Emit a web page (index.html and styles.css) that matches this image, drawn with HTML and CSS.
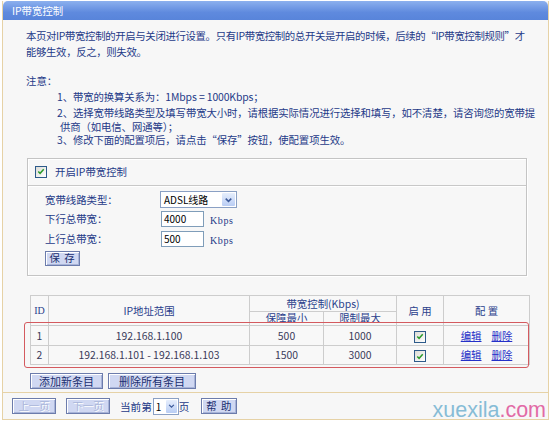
FILE: index.html
```html
<!DOCTYPE html>
<html lang="zh-CN">
<head>
<meta charset="utf-8">
<title>IP带宽控制</title>
<link rel="stylesheet" href="styles.css">
</head>
<body>
<div class="page">
  <div class="titlebar">IP带宽控制</div>
  <div class="content">
    <p class="intro">本页对IP带宽控制的开启与关闭进行设置。只有IP带宽控制的总开关是开启的时候，后续的“IP带宽控制规则”才<br>能够生效，反之，则失效。</p>
    <p class="notice">注意：</p>
    <div class="notes">
      <div class="note n1">1、带宽的换算关系为：1Mbps = 1000Kbps；</div>
      <div class="note">2、选择宽带线路类型及填写带宽大小时，请根据实际情况进行选择和填写，如不清楚，请咨询您的宽带提</div>
      <div class="note cont">供商（如电信、网通等）；</div>
      <div class="note">3、修改下面的配置项后，请点击“保存”按钮，使配置项生效。</div>
    </div>

    <div class="box">
      <div class="box-head">
        <span class="cb"><svg viewBox="0 0 11 11" width="11" height="11"><path d="M2.5 5.5 L4.5 7.5 L8.5 3" fill="none" stroke="#2a9a2a" stroke-width="1.6"/></svg></span>
        <span class="box-title">开启IP带宽控制</span>
      </div>
      <div class="box-body">
        <div class="row r1">
          <span class="lbl">宽带线路类型：</span>
          <span class="sel wide"><span class="sel-text">ADSL线路</span><span class="sel-btn"><svg viewBox="0 0 14 14" width="14" height="14"><path d="M4 5.5 L7 8.5 L10 5.5" fill="none" stroke="#3c5a9a" stroke-width="1.6"/></svg></span></span>
        </div>
        <div class="row r2">
          <span class="lbl">下行总带宽：</span>
          <span class="inp">4000</span><span class="unit">Kbps</span>
        </div>
        <div class="row r3">
          <span class="lbl">上行总带宽：</span>
          <span class="inp">500</span><span class="unit">Kbps</span>
        </div>
        <div class="row r4"><button class="btn save">保 存</button></div>
      </div>
    </div>

    <table class="rules">
      <colgroup>
        <col class="c-id"><col class="c-ip"><col class="c-min"><col class="c-max"><col class="c-en"><col class="c-cfg">
      </colgroup>
      <thead>
        <tr class="h1">
          <th rowspan="2" class="idh">ID</th>
          <th rowspan="2">IP地址范围</th>
          <th colspan="2">带宽控制(Kbps)</th>
          <th rowspan="2">启 用</th>
          <th rowspan="2">配 置</th>
        </tr>
        <tr class="h2">
          <th>保障最小</th>
          <th>限制最大</th>
        </tr>
      </thead>
      <tbody>
        <tr class="d1">
          <td>1</td>
          <td>192.168.1.100</td>
          <td>500</td>
          <td>1000</td>
          <td><span class="cb small"><svg viewBox="0 0 11 11" width="11" height="11"><path d="M2.5 5.5 L4.5 7.5 L8.5 3" fill="none" stroke="#2a9a2a" stroke-width="1.6"/></svg></span></td>
          <td><a class="lnk">编辑</a><a class="lnk">删除</a></td>
        </tr>
        <tr class="d2">
          <td>2</td>
          <td>192.168.1.101 - 192.168.1.103</td>
          <td>1500</td>
          <td>3000</td>
          <td><span class="cb small"><svg viewBox="0 0 11 11" width="11" height="11"><path d="M2.5 5.5 L4.5 7.5 L8.5 3" fill="none" stroke="#2a9a2a" stroke-width="1.6"/></svg></span></td>
          <td><a class="lnk">编辑</a><a class="lnk">删除</a></td>
        </tr>
      </tbody>
    </table>

    <div class="actions">
      <button class="btn add">添加新条目</button>
      <button class="btn delall">删除所有条目</button>
    </div>
  </div>
  <div class="footer">
    <button class="btn pg disabled">上一页</button>
    <button class="btn pg disabled">下一页</button>
    <span class="cur">当前第</span>
    <span class="sel num"><span class="sel-text">1</span><span class="sel-btn"><svg viewBox="0 0 14 14" width="14" height="14"><path d="M4 5.5 L7 8.5 L10 5.5" fill="none" stroke="#3c5a9a" stroke-width="1.6"/></svg></span></span>
    <span class="cur">页</span>
    <button class="btn help">帮 助</button>
  </div>
  <div class="highlight"></div>
  <div class="watermark"><span class="wm-a">xuexila</span><span class="wm-b">.com</span></div>
</div>
</body>
</html>
```
FILE: styles.css
```css
* { box-sizing: border-box; }
html, body { margin: 0; padding: 0; background: #ffffff; }
body {
  font-family: "Noto Sans CJK SC", "Liberation Sans", sans-serif;
  font-size: 10.4px;
  color: #1e3a88;
}
.page {
  position: relative;
  margin: 1px 0 0 2px;
  width: 547px;
  height: 419px;
  background: #f7f7f7;
  border-left: 1px solid #e6d2a6;
  border-right: 1px solid #e6d2a6;
  border-bottom: 1px solid #e6d2a6;
  display: flex;
  flex-direction: column;
}
.titlebar {
  height: 19px;
  background: linear-gradient(#8cb0ee, #5f8ade 60%, #5884da);
  border-radius: 5px 5px 0 0;
  color: #ffffff;
  padding-left: 9px;
  line-height: 19px;
  font-size: 10.4px;
}
.content {
  padding: 0 0 0 23px;
  flex: 1;
}
.intro {
  margin: 8px 0 0 0;
  line-height: 16px;
  letter-spacing: -0.35px;
  white-space: nowrap;
}
.notice {
  margin: 13px 0 0 0;
  line-height: 16px;
}
.notes { padding-left: 31px; }
.note { line-height: 13.5px; white-space: nowrap; letter-spacing: -0.12px; }
.note.n1 { line-height: 16px; margin-bottom: 1px; }
.note.cont { padding-left: 3px; }

.box {
  margin: 11px 0 0 1px;
  width: 500px;
  height: 118px;
  border: 1px solid #c4c4c4;
  box-shadow: inset 1px 1px 0 #ffffff, 1px 1px 0 #ffffff;
}
.box-head {
  height: 27px;
  display: flex;
  align-items: center;
  padding-left: 7px;
  border-bottom: 1px solid #c8c8c8;
  box-shadow: 0 1px 0 #ffffff;
}
.box-title { margin-left: 8px; }
.cb {
  display: inline-flex;
  width: 12px;
  height: 12px;
  border: 1px solid #2d5a8a;
  background: linear-gradient(135deg, #dcdcd6, #ffffff);
  align-items: center;
  justify-content: center;
}
.cb svg { display: block; }
.box-body { padding: 6px 0 0 17px; }
.row { display: flex; align-items: center; height: 16px; }
.row.r2 { margin-top: 3px; }
.row.r3 { margin-top: 4px; }
.row.r4 { margin-top: 4px; height: 15px; }
.lbl { width: 115px; }
.sel {
  display: inline-flex;
  align-items: stretch;
  height: 17px;
  border: 1px solid #8aa0c4;
  background: #ffffff;
  color: #000000;
}
.sel.wide { width: 77px; }
.sel-text { flex: 1; padding-left: 3px; line-height: 15px; font-size: 10px; }
.sel-btn {
  width: 15px;
  background: linear-gradient(#e6eefc, #b9cdf4);
  border: 1px solid #ffffff;
  border-radius: 2px;
  display: flex;
  align-items: center;
  justify-content: center;
}
.inp {
  width: 43px;
  height: 16px;
  margin-left: 1px;
  border: 1px solid #7f9db9;
  background: #ffffff;
  color: #000000;
  padding-left: 2px;
  line-height: 14px;
  font-size: 10px;
}
.unit {
  margin-left: 6px;
  font-family: "Liberation Serif", serif;
  font-size: 10px;
  letter-spacing: 0.6px;
  padding-top: 3px;
}
.btn {
  font-family: "Noto Sans CJK SC", sans-serif;
  font-size: 10.4px;
  color: #1b2f70;
  background: #d0d8f2;
  border: 1px solid #6c7cac;
  box-shadow: inset 1px 1px 0 #ffffff, inset -1px -1px 0 #a8b4d8;
  padding: 0;
  height: 15px;
  line-height: 12px;
  margin: 0;
}
.btn.save { width: 35px; letter-spacing: 1px; }

.rules {
  margin: 19px 0 0 4px;
  border-collapse: collapse;
  table-layout: fixed;
  width: 499px;
  background: #f8f8f8;
}
.c-id { width: 18px; }
.c-ip { width: 201px; }
.c-min { width: 74px; }
.c-max { width: 73px; }
.c-en { width: 47px; }
.c-cfg { width: 86px; }
.rules th, .rules td {
  border: 1px solid #cdcdcd;
  padding: 0;
  text-align: center;
  font-weight: normal;
  white-space: nowrap;
}
.rules th { color: #2a3f8c; }
.rules td { color: #3a3a5a; }
.rules .idh { font-family: "Liberation Serif", serif; font-size: 10px; }
.rules tr.h1 { height: 16px; }
.rules tr.h2 { height: 14px; }
.rules tr.h2 th { line-height: 12px; }
.rules tr.d1 { height: 20px; }
.rules tr.d2 { height: 19px; }
.rules .cb.small { vertical-align: middle; }
.lnk {
  color: #2430c8;
  text-decoration: underline;
  margin: 0 5px;
}

.actions {
  margin: 8px 0 0 4px;
  display: flex;
  gap: 5px;
}
.btn.add { width: 73px; height: 16px; font-size: 11px; }
.btn.delall { width: 88px; height: 16px; font-size: 11px; }

.footer {
  height: 27px;
  border-top: 1px solid #e6d2a6;
  display: flex;
  align-items: center;
  padding-left: 9px;
}
.btn.pg { width: 44px; height: 16px; margin-right: 10px; }
.btn.disabled { color: #aab6da; text-shadow: 1px 1px 0 #ffffff; }
.cur { color: #1e3a88; font-size: 10.6px; }
.sel.num { width: 26px; margin: 0 0 0 1px; height: 17px; }
.sel.num .sel-text { padding-left: 2px; }
.sel.num .sel-btn { width: 13px; }
.btn.help { width: 36px; height: 16px; margin-left: 12px; letter-spacing: 1px; }

.highlight {
  position: absolute;
  left: 21px;
  top: 321px;
  width: 505px;
  height: 46px;
  border: 1.5px solid #d45a5f;
  border-radius: 3px;
}
.watermark {
  position: absolute;
  right: 2px;
  bottom: -3px;
  font-family: "Liberation Sans", Arial, sans-serif;
  font-size: 21.5px;
  line-height: 24px;
}
.wm-a { color: #86bcd6; }
.wm-b { color: #e26aa6; }
```
